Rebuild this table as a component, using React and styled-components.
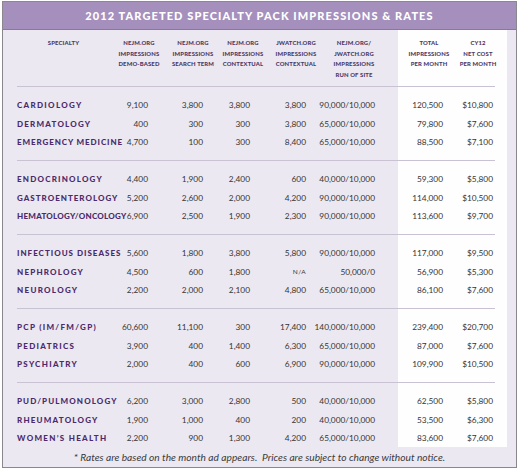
import React from "react";
import styled, { createGlobalStyle } from "styled-components";

// w = track width, c = distance of the header's centre from the track's right edge
const columns = [
    { w: 38, c: 9 },
    { w: 55, c: 10 },
    { w: 47, c: 7 },
    { w: 56, c: 10 },
    { w: 69, c: 21 },
    { w: 68, c: 14 },
    { w: 50, c: 15 },
];

const headers = [
    ["NEJM.ORG", "IMPRESSIONS", "DEMO-BASED"],
    ["NEJM.ORG", "IMPRESSIONS", "SEARCH TERM"],
    ["NEJM.ORG", "IMPRESSIONS", "CONTEXTUAL"],
    ["JWATCH.ORG", "IMPRESSIONS", "CONTEXTUAL"],
    ["NEJM.ORG/", "JWATCH.ORG", "IMPRESSIONS", "RUN OF SITE"],
    ["TOTAL", "IMPRESSIONS", "PER MONTH"],
    ["CY12", "NET COST", "PER MONTH"],
];

// track = letter spacing; the long names are set tighter, as in print
const groups = [
    [
        { name: "CARDIOLOGY", track: 1.3, values: ["9,100", "3,800", "3,800", "3,800", "90,000/10,000", "120,500", "$10,800"] },
        { name: "DERMATOLOGY", track: 1.2, values: ["400", "300", "300", "3,800", "65,000/10,000", "79,800", "$7,600"] },
        { name: "EMERGENCY MEDICINE", track: 0.9, values: ["4,700", "100", "300", "8,400", "65,000/10,000", "88,500", "$7,100"] },
    ],
    [
        { name: "ENDOCRINOLOGY", track: 1.2, values: ["4,400", "1,900", "2,400", "600", "40,000/10,000", "59,300", "$5,800"] },
        { name: "GASTROENTEROLOGY", track: 1.0, values: ["5,200", "2,600", "2,000", "4,200", "90,000/10,000", "114,000", "$10,500"] },
        { name: "HEMATOLOGY/ONCOLOGY", track: 0.25, values: ["6,900", "2,500", "1,900", "2,300", "90,000/10,000", "113,600", "$9,700"] },
    ],
    [
        { name: "INFECTIOUS DISEASES", track: 1.0, values: ["5,600", "1,800", "3,800", "5,800", "90,000/10,000", "117,000", "$9,500"] },
        { name: "NEPHROLOGY", track: 1.2, values: ["4,500", "600", "1,800", "N/A", "50,000/0", "56,900", "$5,300"] },
        { name: "NEUROLOGY", track: 1.3, values: ["2,200", "2,000", "2,100", "4,800", "65,000/10,000", "86,100", "$7,600"] },
    ],
    [
        { name: "PCP (IM/FM/GP)", track: 1.3, values: ["60,600", "11,100", "300", "17,400", "140,000/10,000", "239,400", "$20,700"] },
        { name: "PEDIATRICS", track: 1.3, values: ["3,900", "400", "1,400", "6,300", "65,000/10,000", "87,000", "$7,600"] },
        { name: "PSYCHIATRY", track: 1.3, values: ["2,000", "400", "600", "6,900", "90,000/10,000", "109,900", "$10,500"] },
    ],
    [
        { name: "PUD/PULMONOLOGY", track: 1.1, values: ["6,200", "3,000", "2,800", "500", "40,000/10,000", "62,500", "$5,800"] },
        { name: "RHEUMATOLOGY", track: 1.2, values: ["1,900", "1,000", "400", "200", "40,000/10,000", "53,500", "$6,300"] },
        { name: "WOMEN\u2019S HEALTH", track: 1.3, values: ["2,200", "900", "1,300", "4,200", "65,000/10,000", "83,600", "$7,600"] },
    ],
];

const App = () => {
    return (
        <>
            <GlobalStyle />
            <Frame>
                <TitleBar>2012 TARGETED SPECIALTY PACK IMPRESSIONS &amp; RATES</TitleBar>
                <TableArea>
                    <HeaderRow>
                        <HeadLabel>SPECIALTY</HeadLabel>
                        {headers.map((lines, i) => (
                            <HeadCell key={i} $pad={columns[i].w - 2 * columns[i].c}>
                                <HeadLabel>
                                    {lines.map((line) => (
                                        <div key={line}>{line}</div>
                                    ))}
                                </HeadLabel>
                            </HeadCell>
                        ))}
                    </HeaderRow>
                    {groups.map((rows, g) => (
                        <Group key={g} $last={g === groups.length - 1}>
                            {rows.map((row) => (
                                <Row key={row.name}>
                                    <Specialty $track={row.track}>{row.name}</Specialty>
                                    {row.values.map((v, i) => (
                                        <Value key={i} $small={v === "N/A"}>{v}</Value>
                                    ))}
                                </Row>
                            ))}
                        </Group>
                    ))}
                </TableArea>
                <Footnote>* Rates are based on the month ad appears.{"\u00a0 "}Prices are subject to change without notice.</Footnote>
            </Frame>
        </>
    );
};

const GlobalStyle = createGlobalStyle`
    body {
        margin: 0;
        background: #fff;
        font-family: Lato, "Open Sans", sans-serif;
    }
`;

const Frame = styled.div`
    margin: 1px 3px 0 2px;
    border: 1px solid #8b8790;
    background: #ece8f1;
`;

const TitleBar = styled.div`
    height: 27px;
    background: #a590bd;
    border-bottom: 1px solid #8a779f;
    color: #fff;
    font-family: Lato, sans-serif;
    font-weight: 900;
    font-size: 11px;
    letter-spacing: 1.1px;
    display: flex;
    align-items: center;
    justify-content: center;
`;

const TableArea = styled.div`
    padding: 8px 21px 0 14px;
    background: linear-gradient(
        to right,
        transparent 395px,
        #fefeff 395px,
        #fefeff 504px,
        transparent 504px
    );
`;

const gridColumns = `93px ${columns.map((c) => `${c.w}px`).join(" ")}`;

const HeaderRow = styled.div`
    display: grid;
    grid-template-columns: ${gridColumns};
    align-items: start;
    padding-bottom: 6px;
    border-bottom: 1px solid #c9c2d3;
`;

const HeadCell = styled.div`
    display: flex;
    justify-content: center;
    padding-left: ${(p) => p.$pad}px;
`;

const HeadLabel = styled.div`
    font-family: Lato, sans-serif;
    font-weight: 900;
    font-size: 5.9px;
    line-height: 10.5px;
    letter-spacing: 0.15px;
    color: #4a3a66;
    text-align: center;
    white-space: nowrap;
`;

const Group = styled.div`
    padding-top: 8.75px;
    padding-bottom: ${(p) => (p.$last ? "0" : "8.75px")};
    border-bottom: ${(p) => (p.$last ? "none" : "1px solid #c9c2d3")};
`;

const Row = styled.div`
    display: grid;
    grid-template-columns: ${gridColumns};
    align-items: center;
    height: 18.5px;
`;

const Specialty = styled.div`
    font-family: Lato, sans-serif;
    font-weight: 900;
    font-size: 8px;
    letter-spacing: ${(p) => p.$track}px;
    color: #4b2b6c;
    white-space: nowrap;
`;

const Value = styled.div`
    display: flex;
    justify-content: flex-end;
    white-space: nowrap;
    font-family: Lato, sans-serif;
    font-size: ${(p) => (p.$small ? "6.5px" : "8.3px")};
    letter-spacing: ${(p) => (p.$small ? "0.4px" : "0")};
    color: #353535;
`;

const Footnote = styled.div`
    padding: 4px 0;
    line-height: 12px;
    text-align: center;
    font-family: Lato, sans-serif;
    font-style: italic;
    font-size: 10.2px;
    color: #3a3a3a;
`;

export default App;
